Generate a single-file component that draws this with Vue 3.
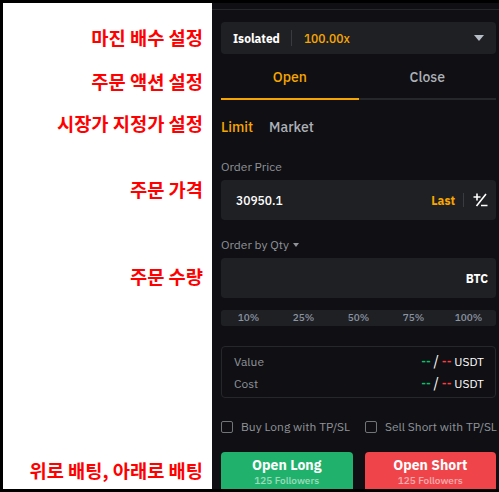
<script setup>
const pcts = ['10%', '25%', '50%', '75%', '100%']
const costs = ['Value', 'Cost']
</script>

<template>
  <div class="frame">
    <div class="labels">
      <div class="lab l1">마진 배수 설정</div>
      <div class="lab l2">주문 액션 설정</div>
      <div class="lab l3">시장가 지정가 설정</div>
      <div class="lab l4">주문 가격</div>
      <div class="lab l5">주문 수량</div>
      <div class="lab l6">위로 배팅, 아래로 배팅</div>
    </div>
    <div class="panel">
      <div class="topline"></div>
      <div class="leverage">
        <span class="iso">Isolated</span>
        <span class="vsep"></span>
        <span class="lev">100.00x</span>
        <svg class="caret" width="10" height="6" viewBox="0 0 10 6"><path d="M0 0h10L5 6z" fill="#b7bdc6" /></svg>
      </div>
      <div class="tabs">
        <div class="tab active">Open</div>
        <div class="tab">Close</div>
      </div>
      <div class="types">
        <span class="limit">Limit</span>
        <span class="market">Market</span>
      </div>
      <div class="flabel price-label">Order Price</div>
      <div class="field">
        <span class="val">30950.1</span>
        <span class="last">Last</span>
        <span class="vsep small"></span>
        <svg class="pm" width="15" height="14" viewBox="0 0 15 14" fill="none" stroke="#fff" stroke-width="1.6">
          <path d="M0.5 4h7M4 0.5v7M13 1L3.5 13M8 12.5h6.5" />
        </svg>
      </div>
      <div class="flabel qty-label">Order by Qty <i class="mini"></i></div>
      <div class="field">
        <span class="btc">BTC</span>
      </div>
      <div class="pcts">
        <span v-for="p in pcts" :key="p" class="pct">{{ p }}</span>
      </div>
      <div class="costbox">
        <div v-for="c in costs" :key="c" class="costrow">
          <span class="cname">{{ c }}</span>
          <span class="cval"><b class="g">--</b> <em>/</em> <b class="r">--</b> USDT</span>
        </div>
      </div>
      <div class="checks">
        <label class="chk"><i class="box"></i>Buy Long with TP/SL</label>
        <label class="chk"><i class="box"></i>Sell Short with TP/SL</label>
      </div>
      <div class="btns">
        <div class="btn long"><strong>Open Long</strong><small>125 Followers</small></div>
        <div class="btn short"><strong>Open Short</strong><small>125 Followers</small></div>
      </div>
    </div>
  </div>
</template>

<style>
html, body { margin: 0; background: #000; }
</style>

<style scoped>
.frame {
  width: 499px;
  height: 492px;
  box-sizing: border-box;
  padding: 3px 0 3px 3px;
  background: #000;
  display: flex;
  overflow: hidden;
  font-family: "IBM Plex Sans", Roboto, "Liberation Sans", sans-serif;
}
.labels {
  width: 209px;
  flex: none;
  background: #fff;
  position: relative;
}
.lab {
  position: absolute;
  right: 9px;
  color: #f00;
  font: 700 18.7px/24px "Noto Sans CJK KR", sans-serif;
  white-space: nowrap;
}
.l1 { top: 22px; }
.l2 { top: 66px; }
.l3 { top: 108px; }
.l4 { top: 174px; }
.l5 { top: 261px; }
.l6 { top: 455px; }
.panel {
  flex: 1;
  background: #101014;
  height: 486px;
  overflow: hidden;
  color: #fff;
}
.topline {
  height: 1px;
  margin-top: 6px;
  background: #26272b;
}
.leverage {
  margin: 12px 3px 0 9px;
  height: 32px;
  background: #1f2024;
  border-radius: 4px;
  display: flex;
  align-items: center;
  padding: 0 12px;
  font-size: 12px;
  font-weight: 700;
}
.vsep { width: 1px; height: 16px; background: #3a3b40; margin: 0 12px 0 11px; }
.lev { color: #f7a600; font-weight: 500; font-size: 12px; }
.caret { margin-left: auto; }
.tabs {
  margin: 0 3px 0 9px;
  display: flex;
  height: 46px;
}
.tab {
  flex: 1;
  text-align: center;
  line-height: 46px;
  font-size: 14px;
  font-weight: 500;
  color: #adb1b8;
  border-bottom: 2px solid #26272b;
}
.tab.active { color: #f7a600; border-bottom-color: #f7a600; }
.types {
  margin: 18px 0 0 9px;
  font-size: 14px;
  line-height: 18px;
  font-weight: 500;
  display: flex;
  gap: 16px;
}
.limit { color: #f7a600; }
.market { color: #adb1b8; }
.flabel {
  margin-left: 9px;
  font-size: 12px;
  line-height: 16px;
  color: #8f939a;
}
.price-label { margin-top: 23px; margin-bottom: 5px; }
.qty-label { margin-top: 17px; margin-bottom: 5px; display: flex; align-items: center; gap: 4px; }
.mini {
  width: 0; height: 0;
  border: 3px solid transparent;
  border-top: 4px solid #8f939a;
  border-bottom: 0;
}
.field {
  margin: 0 3px 0 9px;
  height: 40px;
  background: #1f2024;
  border-radius: 4px;
  display: flex;
  align-items: center;
  padding: 0 8px 0 15px;
  font-size: 12px;
}
.val { font-size: 12px; font-weight: 500; }
.last { margin-left: auto; color: #f7a600; font-weight: 700; font-size: 12px; }
.vsep.small { height: 14px; margin: 0 9px 0 8px; }
.btc { margin-left: auto; font-weight: 700; font-size: 12px; }
.pcts {
  margin: 12px 3px 0 9px;
  height: 16px;
  background: #1f2024;
  border-radius: 3px;
  display: flex;
  font-size: 10px;
  font-weight: 500;
  line-height: 16px;
  color: #8b95a3;
}
.pct { flex: 1; text-align: center; }
.costbox {
  margin: 20px 3px 0 9px;
  height: 52px;
  box-sizing: border-box;
  border: 1px solid #26272b;
  border-radius: 4px;
  padding: 4px 11px 0 12px;
}
.costrow {
  display: flex;
  justify-content: space-between;
  height: 22px;
  line-height: 22px;
  font-size: 12px;
}
.cname { color: #8f939a; }
.cval b { font-weight: 500; }
.cval em { font-style: normal; font-size: 14px; line-height: 14px; }
.cval .g { color: #00c46a; }
.cval .r { color: #ff3b3f; }
.checks {
  margin: 21px 0 0 9px;
  display: flex;
  white-space: nowrap;
  font-size: 12px;
  line-height: 16px;
  color: #8f939a;
}
.chk { display: flex; align-items: center; width: 144px; flex: none; }
.box {
  width: 10px; height: 10px;
  border: 1px solid #71757a;
  border-radius: 2px;
  margin-right: 8px;
}
.btns {
  margin: 17px 3px 0 9px;
  display: flex;
  gap: 12px;
}
.btn {
  flex: 1;
  height: 40px;
  border-radius: 4px 4px 0 0;
  text-align: center;
  display: flex;
  flex-direction: column;
  align-items: center;
  padding-top: 5px;
  box-sizing: border-box;
}
.btn strong { font-size: 14px; line-height: 17px; font-weight: 700; }
.btn small { font-size: 10px; line-height: 13px; opacity: .55; font-weight: 500; }
.long { background: #20b26c; }
.short { background: #ef454a; }
</style>
